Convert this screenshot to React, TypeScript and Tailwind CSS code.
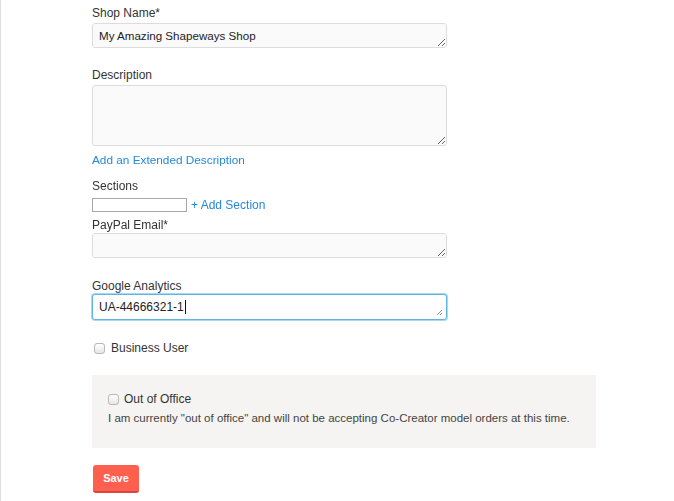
import React from 'react'

const font = { fontFamily: '"Liberation Sans", Arial, Helvetica, sans-serif' }

const Label = ({ children, className = '' }: { children: React.ReactNode; className?: string }) => (
  <label className={`block text-[12px] leading-[16px] text-[#333] ${className}`}>{children}</label>
)

const Box = ({ className = '', value = '' }: { className?: string; value?: string }) => (
  <textarea
    rows={1}
    defaultValue={value}
    className={`block w-[355px] resize-y rounded-[3px] border border-[#dcdcdc] bg-[#fafafa] px-[6px] py-[5px] text-[11.6px] leading-[14px] text-[#222] outline-none ${className}`}
  />
)

const Check = () => (
  <input
    type="checkbox"
    className="h-[11px] w-[11px] appearance-none rounded-[3px] border border-[#b8b8b8] bg-gradient-to-b from-white to-[#e6e6e6]"
  />
)

export default function App() {
  return (
    <div className="min-h-screen border-l border-[#dedede] bg-white" style={font}>
      <form className="flex flex-col items-start pl-[91px] pt-[5px]" onSubmit={(e) => e.preventDefault()}>
        <Label className="mb-[2px]">Shop Name*</Label>
        <Box className="h-[25px]" value="My Amazing Shapeways Shop" />

        <Label className="mt-[19px] mb-[2px]">Description</Label>
        <Box className="h-[61px]" />

        <a href="#" className="mt-[6px] text-[11.8px] leading-[16px] text-[#2589d8]">
          Add an Extended Description
        </a>

        <Label className="mt-[10px]">Sections</Label>
        <div className="mt-[4px] flex h-[14px] items-center gap-[4px]">
          <input type="text" className="h-[14px] w-[95px] border border-[#a8a8a8] bg-white px-1 text-[11px] outline-none" />
          <a href="#" className="text-[12px] leading-[14px] text-[#2589d8]">+ Add Section</a>
        </div>

        <Label className="mt-[5px]">PayPal Email*</Label>
        <Box className="h-[25px]" />

        <Label className="mt-[20px]">Google Analytics</Label>
        <div className="relative flex h-[26px] w-[355px] items-center rounded-[3px] border border-[#5fb4e8] bg-white px-[6px] text-[12px] text-[#222] shadow-[0_0_0_1px_#a9d8f5]">
          <span>UA-44666321-1</span>
          <span className="ml-[1px] inline-block h-[14px] w-px bg-[#111]" />
          <svg className="absolute bottom-[3px] right-[3px]" width="7" height="7" viewBox="0 0 7 7">
            <path d="M1 6 L6 1 M4 6 L6 4" stroke="#9a9a9a" strokeWidth="1" />
          </svg>
        </div>

        <div className="mt-[20px] ml-[2px] flex h-[16px] items-center gap-[6px] text-[12px] text-[#333]">
          <Check />
          <span>Business User</span>
        </div>

        <div className="mt-[19px] w-[504px] bg-[#f5f4f2] pb-[22px] pl-[16px] pt-[16px] text-[12px] leading-[16px] text-[#333]">
          <div className="flex h-[16px] items-center gap-[5px]">
            <Check />
            <span>Out of Office</span>
          </div>
          <p className="mt-[3px] text-[11.5px] text-[#444]">
            I am currently "out of office" and will not be accepting Co-Creator model orders at this time.
          </p>
        </div>

        <button
          type="submit"
          className="mt-[17px] ml-[1px] h-[28px] w-[46px] rounded-[3px] border-b-2 border-[#d8463b] bg-[#ff5f4f] text-[11px] font-bold text-white"
        >
          Save
        </button>
      </form>
    </div>
  )
}
